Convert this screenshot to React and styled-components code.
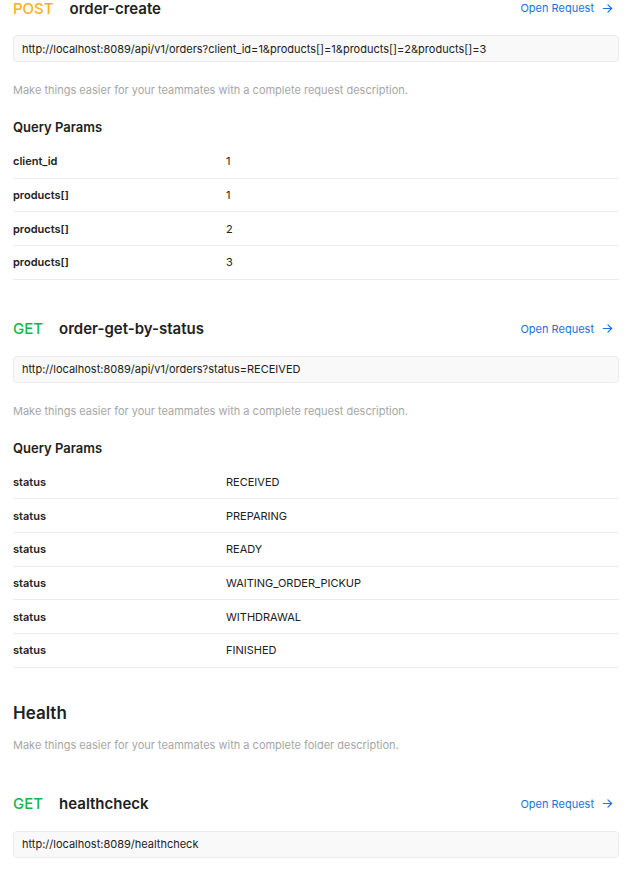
import React from "react";
import styled, { createGlobalStyle } from "styled-components";

const Global = createGlobalStyle`
  html, body { margin: 0; padding: 0; background: #ffffff; }
  body { font-family: Inter, "Noto Sans", sans-serif; color: #212121; -webkit-font-smoothing: antialiased; }
`;

const Page = styled.div`
  width: 606px;
  margin: -3px 0 0 13px;
  display: flex;
  flex-direction: column;
`;

const Request = styled.section`
  display: flex;
  flex-direction: column;
  margin-top: ${(p) => p.$top || 0}px;
`;

const Header = styled.div`
  display: flex;
  align-items: center;
  height: 22px;
`;

const Method = styled.span`
  font-size: 15px;
  font-weight: 500;
  color: ${(p) => (p.$method === "POST" ? "#FFB11A" : "#10B84F")};
  margin-right: 16px;
`;

const Name = styled.span`
  font-size: 15px;
  font-weight: 600;
  color: #212121;
  flex: 1;
`;

const OpenLink = styled.a`
  display: flex;
  align-items: center;
  gap: 8px;
  font-size: 11px;
  color: #1a73d9;
  text-decoration: none;
  margin-right: 6px;
`;

const UrlBox = styled.div`
  margin-top: 16px;
  height: 27px;
  box-sizing: border-box;
  border: 1px solid #ececec;
  border-radius: 4px;
  background: #f9f9f9;
  display: flex;
  align-items: center;
  padding: 0 8px;
  font-size: 11px;
  color: #212121;
`;

const Description = styled.p`
  margin: ${(p) => p.$top ?? 19}px 0 0;
  font-size: 11px;
  line-height: 18px;
  color: #a6a6a6;
`;

const SubTitle = styled.h3`
  margin: 18px 0 0;
  font-size: 13px;
  line-height: 20px;
  font-weight: 600;
  color: #212121;
`;

const Params = styled.div`
  margin-top: 8px;
  display: flex;
  flex-direction: column;
`;

const Row = styled.div`
  display: grid;
  grid-template-columns: 213px 1fr;
  align-items: center;
  height: 33.67px;
  box-sizing: border-box;
  border-bottom: 1px solid #ededed;
  font-size: 11px;
`;

const Key = styled.span`
  font-weight: 600;
  color: #212121;
`;

const Value = styled.span`
  color: #212121;
`;

const FolderTitle = styled.h2`
  margin: 32px 0 0;
  font-size: 17px;
  line-height: 26px;
  font-weight: 600;
  color: #212121;
`;

const Arrow = () => (
  <svg width="11" height="11" viewBox="0 0 12 12" fill="none" stroke="currentColor" strokeWidth="1.3" strokeLinecap="round" strokeLinejoin="round">
    <path d="M1.5 6h9M6.5 2l4 4-4 4" />
  </svg>
);

const ReqBlock = ({ method, name, url, params, top }) => (
  <Request $top={top}>
    <Header>
      <Method $method={method}>{method}</Method>
      <Name>{name}</Name>
      <OpenLink href="#">
        Open Request <Arrow />
      </OpenLink>
    </Header>
    <UrlBox>{url}</UrlBox>
    {params && (
      <>
        <Description>Make things easier for your teammates with a complete request description.</Description>
        <SubTitle>Query Params</SubTitle>
        <Params>
          {params.map(([k, v], i) => (
            <Row key={i}>
              <Key>{k}</Key>
              <Value>{v}</Value>
            </Row>
          ))}
        </Params>
      </>
    )}
  </Request>
);

export default function App() {
  return (
    <>
      <Global />
      <Page>
        <ReqBlock
          method="POST"
          name="order-create"
          url="http://localhost:8089/api/v1/orders?client_id=1&products[]=1&products[]=2&products[]=3"
          params={[
            ["client_id", "1"],
            ["products[]", "1"],
            ["products[]", "2"],
            ["products[]", "3"],
          ]}
        />
        <ReqBlock
          top={38}
          method="GET"
          name="order-get-by-status"
          url="http://localhost:8089/api/v1/orders?status=RECEIVED"
          params={[
            ["status", "RECEIVED"],
            ["status", "PREPARING"],
            ["status", "READY"],
            ["status", "WAITING_ORDER_PICKUP"],
            ["status", "WITHDRAWAL"],
            ["status", "FINISHED"],
          ]}
        />
        <FolderTitle>Health</FolderTitle>
        <Description $top={10}>Make things easier for your teammates with a complete folder description.</Description>
        <ReqBlock top={39} method="GET" name="healthcheck" url="http://localhost:8089/healthcheck" />
      </Page>
    </>
  );
}
